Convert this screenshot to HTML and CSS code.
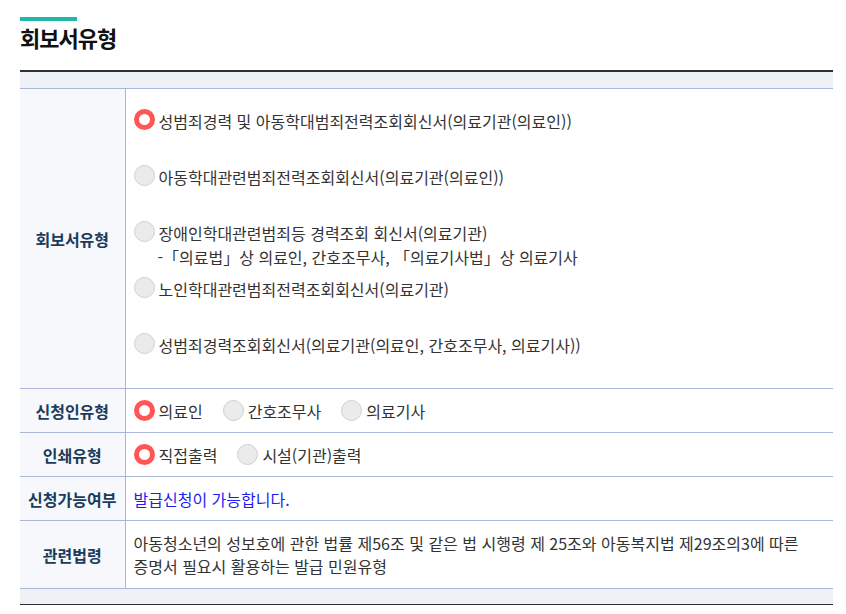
FILE: index.html
```html
<!DOCTYPE html>
<html lang="ko">
<head>
<meta charset="utf-8">
<title>회보서유형</title>
<link rel="stylesheet" href="styles.css">
</head>
<body>
<div class="page">
  <div class="title-bar"></div>
  <h2 class="title">회보서유형</h2>
  <div class="table-wrap">
    <div class="band"></div>
    <table class="form">
      <tr class="row-type">
        <th>회보서유형</th>
        <td class="types">
          <div class="item"><span class="radio on"></span><span>성범죄경력 및 아동학대범죄전력조회회신서(의료기관(의료인))</span></div>
          <div class="item"><span class="radio"></span><span>아동학대관련범죄전력조회회신서(의료기관(의료인))</span></div>
          <div class="item"><span class="radio"></span><span>장애인학대관련범죄등 경력조회 회신서(의료기관)</span>
            <div class="sub">-「의료법」상 의료인, 간호조무사, 「의료기사법」상 의료기사</div>
          </div>
          <div class="item"><span class="radio"></span><span>노인학대관련범죄전력조회회신서(의료기관)</span></div>
          <div class="item last"><span class="radio"></span><span>성범죄경력조회회신서(의료기관(의료인, 간호조무사, 의료기사))</span></div>
        </td>
      </tr>
      <tr>
        <th>신청인유형</th>
        <td>
          <div class="inline">
            <span class="opt"><span class="radio on"></span>의료인</span>
            <span class="opt"><span class="radio"></span>간호조무사</span>
            <span class="opt"><span class="radio"></span>의료기사</span>
          </div>
        </td>
      </tr>
      <tr>
        <th>인쇄유형</th>
        <td>
          <div class="inline">
            <span class="opt"><span class="radio on"></span>직접출력</span>
            <span class="opt"><span class="radio"></span>시설(기관)출력</span>
          </div>
        </td>
      </tr>
      <tr>
        <th>신청가능여부</th>
        <td><span class="ok">발급신청이 가능합니다.</span></td>
      </tr>
      <tr class="row-law">
        <th>관련법령</th>
        <td>아동청소년의 성보호에 관한 법률 제56조 및 같은 법 시행령 제 25조와 아동복지법 제29조의3에 따른<br>증명서 필요시 활용하는 발급 민원유형</td>
      </tr>
    </table>
    <div class="band bottom"></div>
  </div>
</div>
</body>
</html>
```

FILE: styles.css
```css
* { box-sizing: border-box; }
html, body { margin: 0; padding: 0; background: #fff; }
body {
  font-family: "Noto Sans CJK KR", "Noto Sans", sans-serif;
  color: #333;
}
.page {
  padding: 17px 13px 0 20px;
}
.title-bar {
  width: 57px;
  height: 4px;
  background: #1fb8aa;
}
.title {
  margin: 0;
  padding-top: 1px;
  font-size: 22px;
  line-height: 30px;
  font-weight: 700;
  letter-spacing: -1px;
  color: #111;
}
.table-wrap {
  margin-top: 18px;
  border-top: 2px solid #2e3038;
}
.band {
  height: 16px;
  background: #eef1f6;
}
.band.bottom {
  border-bottom: 1px solid #2e3038;
}
.form {
  width: 100%;
  border-collapse: collapse;
  font-size: 16px;
}
.form th, .form td {
  border-top: 1px solid #aab7da;
  border-bottom: 1px solid #aab7da;
}
.form th {
  width: 105px;
  background: #f6f8fb;
  border-right: 1px solid #aab7da;
  color: #1a3c5c;
  font-weight: 700;
  text-align: center;
  vertical-align: middle;
  padding: 0;
  height: 44px;
}
.form td {
  padding: 0 8px 0 8px;
  line-height: 24px;
  vertical-align: middle;
}
.types {
  padding-top: 17px !important;
  padding-bottom: 34px !important;
}
.item {
  height: 56px;
  white-space: nowrap;
}
.item > span:nth-child(2) {
  vertical-align: middle;
}
.item.last { height: 24px; }
.sub {
  padding-left: 24px;
}
.radio {
  display: inline-block;
  width: 21px;
  height: 21px;
  border-radius: 50%;
  background: #ebebeb;
  border: 1px solid #cfcfcf;
  vertical-align: middle;
  margin: -3px 4px 0 0;
}
.radio.on {
  background: #fff;
  border: 5px solid #ff5555;
}
.inline {
  display: flex;
  gap: 20px;
}
.opt {
  display: inline-flex;
  align-items: center;
}
.opt .radio { margin: 0 4px 0 0; }
.ok { color: #1d1df0; }
.row-law td {
  padding-top: 10px;
  padding-bottom: 9px;
  line-height: 23px;
}
.form tr:last-child th, .form tr:last-child td { height: 68px; }
```
